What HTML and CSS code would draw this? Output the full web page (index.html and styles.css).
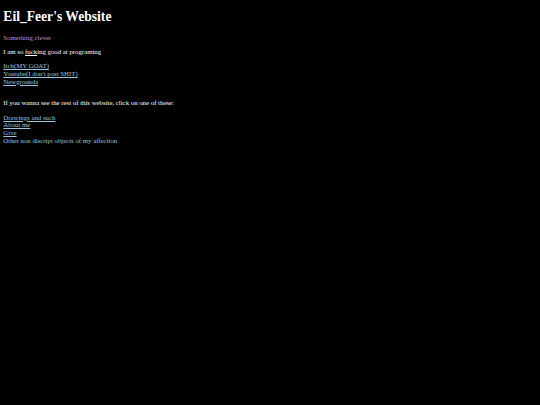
FILE: index.html
```html
<!DOCTYPE html>
<html>
<head>
<meta charset="utf-8">
<title>Eil_Feer's Website</title>
<link rel="stylesheet" href="styles.css">
</head>
<body>
<h1 class="title">Eil_Feer's Website</h1>
<p class="tagline">Something clever</p>
<p class="text">I am so <u>fuck</u>ing good at programing</p>
<div class="links">
<a href="#">Itch(MY GOAT)</a><br>
<a href="#">Youtube(I don't post SHIT)</a><br>
<a href="#">Newgrounds</a><br>
<br>
</div>
<p class="text">If you wanna see the rest of this website, click on one of these:</p>
<div class="links">
<a href="#">Drawings and such</a><br>
<a href="#">About me</a><br>
<a href="#">Give</a><br>
<a href="#">Other non discript objects of my affection</a>
</div>
</body>
</html>
```
FILE: styles.css
```css
html {
  background: #000;
}
body {
  margin: 3.33px;
  background: #000;
  color: #fff;
  font-family: "Liberation Serif", "Times New Roman", serif;
  font-size: 6.8px;
  line-height: 7.6px;
}
.title {
  font-size: 13.6px;
  line-height: 15.5px;
  font-weight: bold;
  margin: 6px 0 9px;
}
.tagline {
  color: #c891d4;
  margin: 6.7px 0;
}
.text {
  margin: 6.7px 0;
}
.links a {
  color: #9cc4dc;
}
```
